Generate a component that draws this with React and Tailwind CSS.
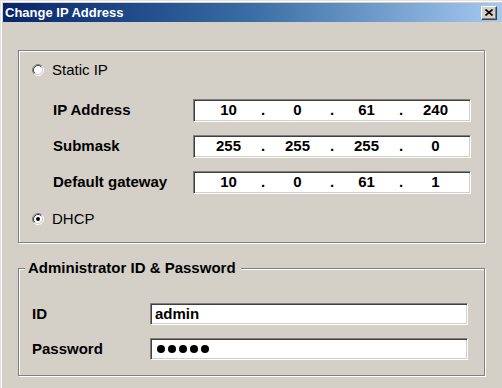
import React from "react";

function Radio({ checked }) {
  return (
    <svg width="12" height="12" viewBox="0 0 12 12" className="shrink-0">
      <circle cx="6" cy="6" r="4.5" fill="#fff" />
      <path d="M9.89 2.11 A5.5 5.5 0 0 0 2.11 9.89" fill="none" stroke="#808080" strokeWidth="1" />
      <path d="M2.11 9.89 A5.5 5.5 0 0 0 9.89 2.11" fill="none" stroke="#ffffff" strokeWidth="1" />
      <path d="M9.18 2.82 A4.5 4.5 0 0 0 2.82 9.18" fill="none" stroke="#404040" strokeWidth="1" />
      <path d="M2.82 9.18 A4.5 4.5 0 0 0 9.18 2.82" fill="none" stroke="#d4d0c8" strokeWidth="1" />
      {checked && <circle cx="6" cy="6" r="2" fill="#000" />}
    </svg>
  );
}

const sunken =
  "border border-t-[#808080] border-l-[#808080] border-b-white border-r-white shadow-[inset_1px_1px_0_#404040,inset_-1px_-1px_0_#d4d0c8] bg-white";

function IpField({ parts }) {
  const items = [];
  parts.forEach((p, i) => {
    items.push(
      <div key={"c" + i} className="flex-1 text-center">
        {p}
      </div>
    );
    if (i < parts.length - 1)
      items.push(
        <div key={"d" + i} className="w-0 flex justify-center">
          .
        </div>
      );
  });
  return (
    <div className={`w-[278px] h-[23px] flex items-center text-[15px] font-bold text-black ${sunken}`}>
      {items}
    </div>
  );
}

function IpRow({ label, parts }) {
  return (
    <div className="h-[23px] flex items-center pl-[34px]">
      <div className="w-[140px] text-[15px] font-bold text-black">{label}</div>
      <IpField parts={parts} />
    </div>
  );
}

const etched =
  "border border-[#808080] shadow-[inset_1px_1px_0_#fff,1px_1px_0_#fff]";

export default function App() {
  return (
    <div className="w-[502px] h-[388px] overflow-hidden bg-[#d4d0c8] font-['Liberation_Sans',Arial,sans-serif] pt-[3px] pl-[3px] shadow-[inset_1px_1px_0_#e6e3de,inset_2px_2px_0_#fff]">
      <div className="h-[19px] flex items-center justify-between pl-[2px] pr-[5px] bg-linear-to-r from-[#0a246a] via-[#3a6ea5] to-[#a6caf0]">
        <span className="text-white font-bold text-[13px] leading-none">Change IP Address</span>
        <div className="w-[16px] h-[14px] bg-[#d4d0c8] border border-t-white border-l-white border-b-[#404040] border-r-[#404040] shadow-[inset_-1px_-1px_0_#808080] flex items-center justify-center">
          <svg width="8" height="7" viewBox="0 0 8 7">
            <path d="M0.5 0.5 L7.5 6.5 M7.5 0.5 L0.5 6.5" stroke="#000" strokeWidth="1.6" />
          </svg>
        </div>
      </div>

      <div className="pl-[15px]">
        <div className={`mt-[28px] w-[467px] h-[193px] ${etched} flex flex-col`}>
          <div className="mt-[12px] h-[14px] flex items-center gap-[8px] pl-[13px] text-[15px] text-black">
            <Radio />
            <span>Static IP</span>
          </div>
          <div className="mt-[22px] flex flex-col gap-[13px]">
            <IpRow label="IP Address" parts={["10", "0", "61", "240"]} />
            <IpRow label="Submask" parts={["255", "255", "255", "0"]} />
            <IpRow label="Default gateway" parts={["10", "0", "61", "1"]} />
          </div>
          <div className="mt-[18px] h-[14px] flex items-center gap-[8px] pl-[13px] text-[15px] text-black">
            <Radio checked />
            <span>DHCP</span>
          </div>
        </div>

        <div className={`relative mt-[25px] w-[467px] h-[108px] ${etched} flex flex-col`}>
          <span className="absolute left-[6px] top-[-9px] leading-[16px] bg-[#d4d0c8] pl-[3px] pr-[5px] text-[15px] font-bold text-black">
            Administrator ID &amp; Password
          </span>
          <div className="mt-[34px] h-[22px] flex items-center pl-[13px]">
            <div className="w-[118px] text-[15px] font-bold text-black">ID</div>
            <div className={`w-[318px] h-[22px] flex items-center pl-[4px] text-[15px] font-bold text-black ${sunken}`}>
              admin
            </div>
          </div>
          <div className="mt-[13px] h-[22px] flex items-center pl-[13px]">
            <div className="w-[118px] text-[15px] font-bold text-black">Password</div>
            <div className={`w-[318px] h-[22px] flex items-center pl-[6px] gap-[3px] ${sunken}`}>
              {[0, 1, 2, 3, 4].map((i) => (
                <span key={i} className="w-[8px] h-[8px] rounded-full bg-black" />
              ))}
            </div>
          </div>
        </div>
      </div>
    </div>
  );
}
